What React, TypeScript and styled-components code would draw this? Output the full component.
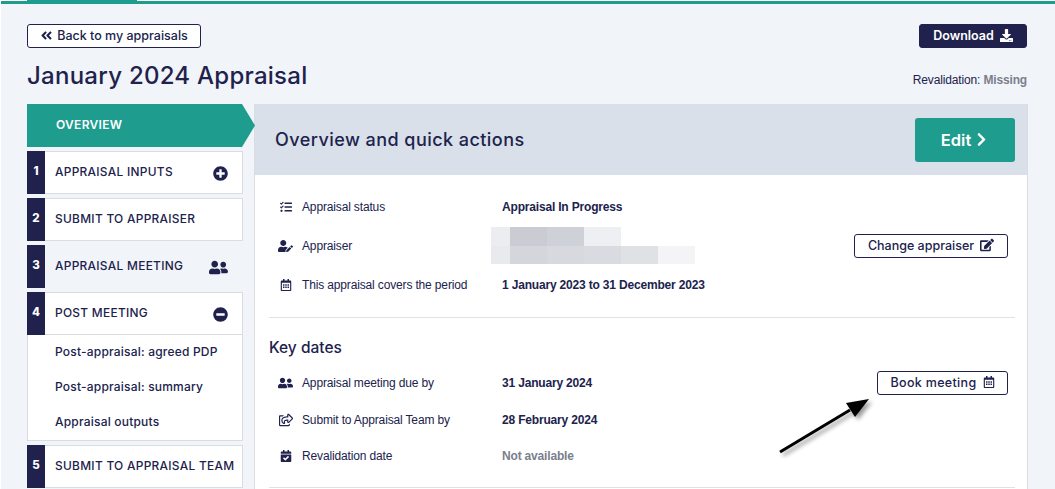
import styled, { createGlobalStyle } from 'styled-components';
import {
  FaAngleDoubleLeft,
  FaCalendarCheck,
  FaChevronRight,
  FaDownload,
  FaEdit,
  FaMinusCircle,
  FaPlusCircle,
  FaRegCalendarAlt,
  FaRegShareSquare,
  FaTasks,
  FaUserEdit,
  FaUserFriends,
} from 'react-icons/fa';

const navy = '#20224d';
const teal = '#1e9c8e';
const heading = `'Inter', 'Noto Sans', sans-serif`;
const body = `'Liberation Sans', Arial, sans-serif`;

const GlobalStyle = createGlobalStyle`
  html, body {
    margin: 0;
    padding: 0;
    height: 489px;
    overflow: hidden;
    background: #fff;
  }
`;

const Page = styled.div`
  height: 489px;
  margin-left: 1px;
  padding-top: 1px;
  box-sizing: border-box;
  overflow: hidden;
  background: linear-gradient(#fff 1px, #f1f4f8 1px);
  color: ${navy};
  font-family: ${body};
`;

const TopBar = styled.div`
  position: relative;
  height: 3px;
  background: ${teal};

  &::before {
    content: '';
    position: absolute;
    left: 26px;
    top: -1px;
    width: 110px;
    height: 1px;
    background: ${teal};
  }
`;

const Content = styled.div`
  padding: 0 26px;
`;

const TopRow = styled.div`
  display: flex;
  justify-content: space-between;
  align-items: center;
  margin-top: 20px;
`;

const OutlineButton = styled.button`
  display: inline-flex;
  align-items: center;
  justify-content: center;
  gap: ${(p) => p.$gap ?? 6}px;
  box-sizing: border-box;
  height: 24px;
  width: ${(p) => p.$width}px;
  padding: 0 0 1px;
  background: #fff;
  border: 1px solid ${navy};
  border-radius: 3px;
  color: ${navy};
  font-family: ${heading};
  font-size: 12.5px;
  font-weight: 500;
  letter-spacing: ${(p) => p.$tracking ?? 0}px;
  white-space: nowrap;

  svg {
    font-size: ${(p) => p.$icon ?? 12}px;
    flex: none;
  }
`;

const DownloadButton = styled(OutlineButton)`
  margin-right: 2px;
  background: ${navy};
  color: #fff;
  font-weight: 600;
`;

const TitleRow = styled.div`
  display: flex;
  justify-content: space-between;
  align-items: flex-end;
  margin-top: 13px;
  height: 30px;
`;

const Title = styled.h1`
  margin: 0;
  font-family: ${heading};
  font-size: 24px;
  line-height: 30px;
  font-weight: 500;
  letter-spacing: 0.26px;
`;

const Revalidation = styled.div`
  margin: 0 2px 4px 0;
  font-size: 12px;
  line-height: 14px;
  letter-spacing: -0.15px;

  b {
    color: #7b7f8c;
  }
`;

const Columns = styled.div`
  display: grid;
  grid-template-columns: 216px 1fr;
  gap: 11px;
  margin: 13px 1px 0 0;
`;

const Sidebar = styled.nav`
  display: flex;
  flex-direction: column;
  gap: 4px;
`;

const ActiveItem = styled.div`
  height: 43px;
  width: 228px;
  display: flex;
  align-items: center;
  padding: 0 0 2px 29px;
  box-sizing: border-box;
  background: ${teal};
  clip-path: polygon(0 0, 215px 0, 228px 50%, 215px 100%, 0 100%);
  color: #fff;
  font-family: ${heading};
  font-size: 12px;
  font-weight: 600;
  letter-spacing: 0.3px;
`;

const NavItem = styled.div`
  box-sizing: border-box;
  height: 43px;
  display: flex;
  background: ${(p) => (p.$plain ? 'transparent' : '#fff')};
  border: 1px solid ${(p) => (p.$plain ? 'transparent' : '#d9dce1')};
  border-left: 0;
`;

const StepNumber = styled.div`
  width: 18px;
  flex: none;
  margin: -1px 0;
  padding-top: 12px;
  box-sizing: border-box;
  background: ${navy};
  color: #fff;
  text-align: center;
  font-family: ${heading};
  font-size: 11.5px;
  line-height: 16px;
  font-weight: 800;
`;

const NavLabel = styled.div`
  flex: 1;
  display: flex;
  align-items: flex-start;
  justify-content: space-between;
  padding: 12px 14px 0 10px;
  font-family: ${heading};
  font-size: 11.9px;
  line-height: 16px;
  font-weight: 500;
  letter-spacing: 0.3px;
  white-space: nowrap;
`;

const NavIcon = styled.span`
  display: flex;
  margin-top: ${(p) => p.$top}px;
  font-size: ${(p) => p.$size}px;
`;

const SubMenu = styled.div`
  box-sizing: border-box;
  height: 106px;
  margin-top: -4px;
  padding: 9px 0 0 27px;
  background: #fff;
  border: 1px solid #d9dce1;
  border-top: 0;
  display: flex;
  flex-direction: column;
  gap: 19px;
`;

const SubLink = styled.div`
  font-family: ${heading};
  font-size: 12px;
  line-height: 16px;
  font-weight: 500;
  letter-spacing: 0.2px;
`;

const Panel = styled.section`
  padding-bottom: 40px;
  background: #fff;
  border: 1px solid #d9dce1;
  border-top: 0;
`;

const PanelHead = styled.header`
  height: 71px;
  box-sizing: border-box;
  display: flex;
  align-items: center;
  justify-content: space-between;
  padding: 0 12px 0 20px;
  background: #d9e0e9;
`;

const PanelTitle = styled.h2`
  margin: 0;
  font-family: ${heading};
  font-size: 18px;
  font-weight: 500;
  letter-spacing: 0.45px;
`;

const EditButton = styled.button`
  width: 100px;
  height: 44px;
  display: inline-flex;
  align-items: center;
  justify-content: center;
  gap: 3px;
  background: ${teal};
  border: 0;
  border-radius: 3px;
  color: #fff;
  font-family: ${heading};
  font-size: 16.5px;
  font-weight: 600;

  svg {
    font-size: 15px;
  }
`;

const Section = styled.div`
  margin: 0 12px 0 14px;
  padding-top: ${(p) => p.$top}px;
  height: ${(p) => p.$height}px;
  box-sizing: border-box;
  border-bottom: 1px solid #dfe1e5;
`;

const SectionTitle = styled.h3`
  margin: 0 0 6px;
  font-family: ${heading};
  font-size: 15.5px;
  line-height: 20px;
  font-weight: 500;
`;

const InfoRow = styled.div`
  display: grid;
  grid-template-columns: 15px 191px 1fr auto;
  column-gap: 9px;
  align-items: center;
  height: ${(p) => p.$height}px;
  padding: 0 7px 0 9px;
  font-size: 12px;
  letter-spacing: -0.15px;
`;

const RowIcon = styled.span`
  display: flex;
  justify-content: center;
  font-size: ${(p) => p.$size ?? 12}px;
`;

const InfoValue = styled.strong`
  color: ${(p) => (p.$muted ? '#7b7f8c' : navy)};
  font-weight: 700;
  letter-spacing: -0.18px;
`;

const BlurredName = styled.div`
  display: grid;
  grid-template-columns: repeat(11, 18.5px);
  grid-auto-rows: 18.5px;
  margin-left: -11px;
  width: 204px;
`;

const BlurCell = styled.div`
  background: ${(p) => p.$c};
`;

const Arrow = styled.svg`
  position: absolute;
  left: 775px;
  top: 395px;
  filter: drop-shadow(3px 3px 2px rgba(0, 0, 0, 0.4));
`;

const blurTop = ['#ecedf0', '#cbccd3', '#cbccd3', '#cfd1d8', '#cfd1d8', '#eeeff2', '#eeeff2'];
const blurBottom = ['#e9eaed', '#d5d6dc', '#d5d6dc', '#d8d9df', '#d8d9df', '#dadbe0', '#dadbe0', '#e0e1e5', '#e0e1e5', '#f4f4f7', '#f4f4f7'];

export default function App() {
  return (
    <>
      <GlobalStyle />
      <Page>
        <TopBar />
        <Content>
          <TopRow>
            <OutlineButton $width={174} $gap={4} $icon={13}>
              <FaAngleDoubleLeft /> Back to my appraisals
            </OutlineButton>
            <DownloadButton $width={108} $icon={13}>
              Download <FaDownload />
            </DownloadButton>
          </TopRow>
          <TitleRow>
            <Title>January 2024 Appraisal</Title>
            <Revalidation>
              Revalidation: <b>Missing</b>
            </Revalidation>
          </TitleRow>
          <Columns>
            <Sidebar>
              <ActiveItem>OVERVIEW</ActiveItem>
              <NavItem>
                <StepNumber>1</StepNumber>
                <NavLabel>
                  APPRAISAL INPUTS
                  <NavIcon $size={15} $top={2}>
                    <FaPlusCircle />
                  </NavIcon>
                </NavLabel>
              </NavItem>
              <NavItem>
                <StepNumber>2</StepNumber>
                <NavLabel>SUBMIT TO APPRAISER</NavLabel>
              </NavItem>
              <NavItem $plain>
                <StepNumber>3</StepNumber>
                <NavLabel>
                  APPRAISAL MEETING
                  <NavIcon $size={19} $top={0}>
                    <FaUserFriends />
                  </NavIcon>
                </NavLabel>
              </NavItem>
              <NavItem>
                <StepNumber>4</StepNumber>
                <NavLabel>
                  POST MEETING
                  <NavIcon $size={15} $top={2}>
                    <FaMinusCircle />
                  </NavIcon>
                </NavLabel>
              </NavItem>
              <SubMenu>
                <SubLink>Post-appraisal: agreed PDP</SubLink>
                <SubLink>Post-appraisal: summary</SubLink>
                <SubLink>Appraisal outputs</SubLink>
              </SubMenu>
              <NavItem>
                <StepNumber>5</StepNumber>
                <NavLabel>SUBMIT TO APPRAISAL TEAM</NavLabel>
              </NavItem>
            </Sidebar>
            <Panel>
              <PanelHead>
                <PanelTitle>Overview and quick actions</PanelTitle>
                <EditButton>
                  Edit <FaChevronRight />
                </EditButton>
              </PanelHead>
              <Section $top={12} $height={143}>
                <InfoRow $height={39}>
                  <RowIcon>
                    <FaTasks />
                  </RowIcon>
                  <span>Appraisal status</span>
                  <InfoValue>Appraisal In Progress</InfoValue>
                </InfoRow>
                <InfoRow $height={39}>
                  <RowIcon $size={16}>
                    <FaUserEdit />
                  </RowIcon>
                  <span>Appraiser</span>
                  <BlurredName>
                    {blurTop.map((c, i) => (
                      <BlurCell key={i} $c={c} />
                    ))}
                    {Array.from({ length: 4 }, (_, i) => (
                      <BlurCell key={i} $c="transparent" />
                    ))}
                    {blurBottom.map((c, i) => (
                      <BlurCell key={i} $c={c} />
                    ))}
                  </BlurredName>
                  <OutlineButton $width={154} $icon={14}>
                    Change appraiser <FaEdit />
                  </OutlineButton>
                </InfoRow>
                <InfoRow $height={39}>
                  <RowIcon>
                    <FaRegCalendarAlt />
                  </RowIcon>
                  <span>This appraisal covers the period</span>
                  <InfoValue>1 January 2023 to 31 December 2023</InfoValue>
                </InfoRow>
              </Section>
              <Section $top={20} $height={170}>
                <SectionTitle>Key dates</SectionTitle>
                <InfoRow $height={37}>
                  <RowIcon $size={16}>
                    <FaUserFriends />
                  </RowIcon>
                  <span>Appraisal meeting due by</span>
                  <InfoValue>31 January 2024</InfoValue>
                  <OutlineButton $width={131} $tracking={0.33}>
                    Book meeting <FaRegCalendarAlt />
                  </OutlineButton>
                </InfoRow>
                <InfoRow $height={37}>
                  <RowIcon $size={14}>
                    <FaRegShareSquare />
                  </RowIcon>
                  <span>Submit to Appraisal Team by</span>
                  <InfoValue>28 February 2024</InfoValue>
                </InfoRow>
                <InfoRow $height={35}>
                  <RowIcon>
                    <FaCalendarCheck />
                  </RowIcon>
                  <span>Revalidation date</span>
                  <InfoValue $muted>Not available</InfoValue>
                </InfoRow>
              </Section>
            </Panel>
          </Columns>
        </Content>
        <Arrow width="105" height="70" viewBox="0 0 105 70">
          <path d="M5 57 L75 15" stroke="#000" strokeWidth="3" />
          <path d="M94 4 L71 8 L80 22 Z" fill="#000" />
        </Arrow>
      </Page>
    </>
  );
}
